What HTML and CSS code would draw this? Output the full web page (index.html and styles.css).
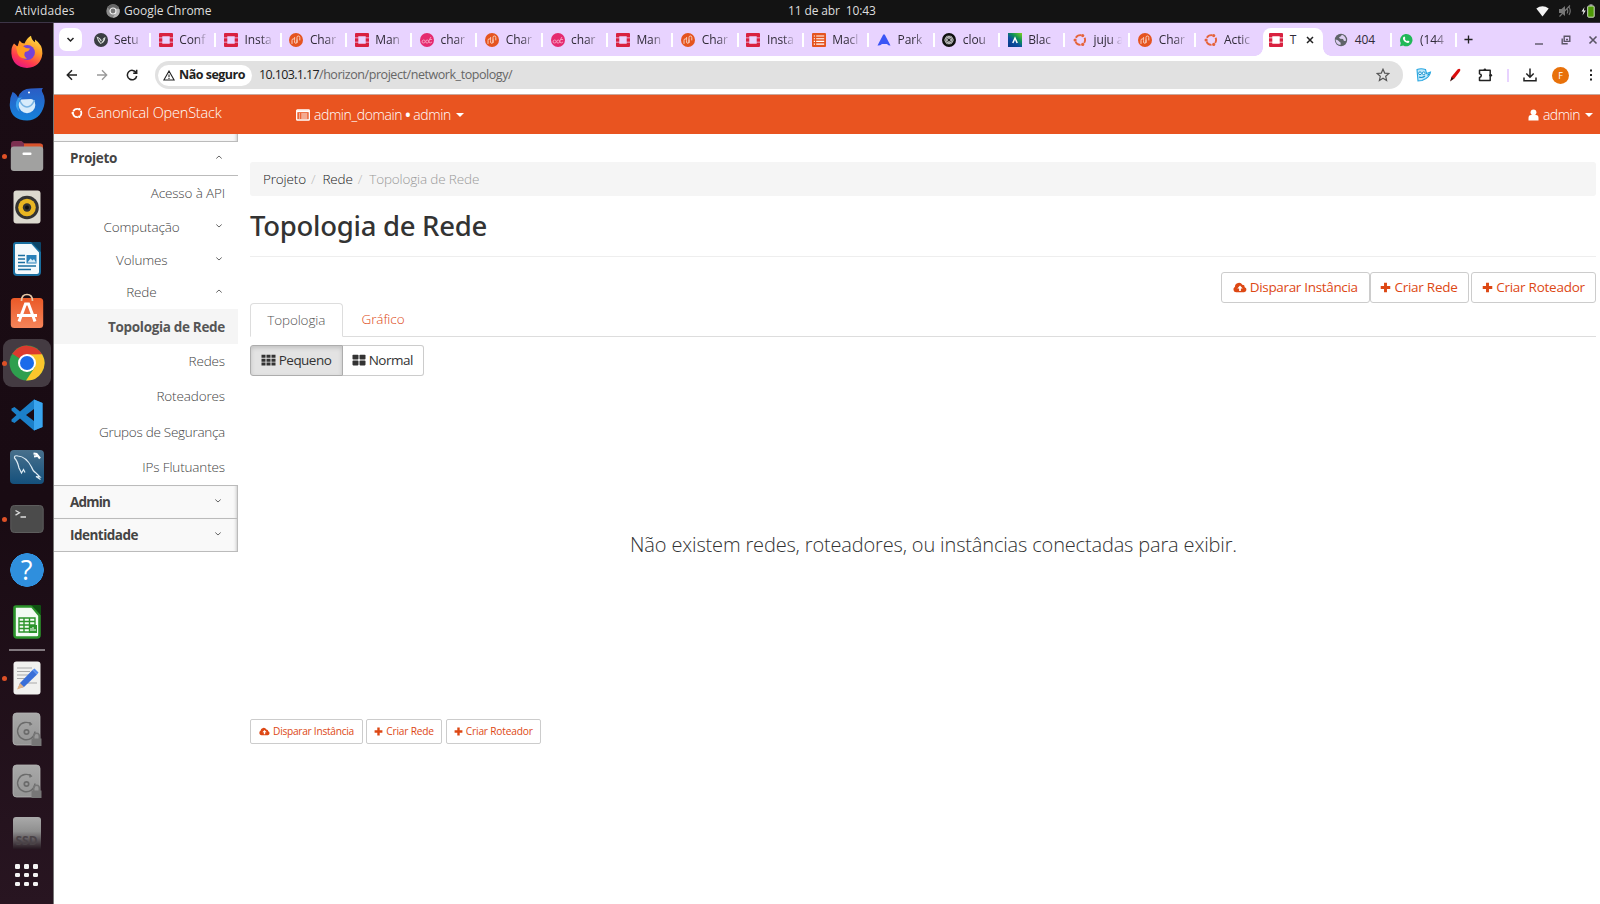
FILE: index.html
```
<!DOCTYPE html>
<html lang="pt-BR">
<head>
<meta charset="utf-8">
<title>Topologia de Rede - Canonical OpenStack</title>
<link rel="stylesheet" href="styles.css">
</head>
<body>
<svg class="defs" aria-hidden="true">
  <symbol id="openstack" viewBox="0 0 14 14"><path d="M1 0h12a1 1 0 0 1 1 1v3.400h-3.300V3.300H3.300v1.100H0V1a1 1 0 0 1 1-1zM0 5.300h3.300v3.400H0zM10.700 5.300h3.300v3.400h-3.300zM0 9.600h3.300v1.100h7.400V9.600H14V13a1 1 0 0 1-1 1H1a1 1 0 0 1-1-1z" fill="#d9213f"/></symbol>
  <symbol id="charm" viewBox="0 0 14 14"><circle cx="7" cy="7" r="7" fill="#e5541f"/><path d="M3 10.500V7.500q0-1.700 1.300-1.700t1.300 1.700V9q0 1.300 1.200 1.300T8 9V4.500q0-1.500 1.400-1.500t1.400 1.500V7M5.600 6V4.500M8 7v2.500" fill="none" stroke="#fbd9cb" stroke-width=".9" stroke-linecap="round"/></symbol>
  <symbol id="pink" viewBox="0 0 14 14"><circle cx="7" cy="7" r="7" fill="#e52a6f"/><path d="M2 9q0-2 1.600-2t1.600 1.500T3.600 10 2 9M5.600 9q0-2 1.600-2t1.600 1.500T7.200 10 5.600 9M8.500 9q1-3 2.500-5M9.500 6.500h2.600M9 9.500q2 1 3-.6" fill="none" stroke="#f7a3c1" stroke-width=".9"/></symbol>
  <symbol id="maas" viewBox="0 0 14 14"><rect width="14" height="14" rx="1" fill="#e5541f"/><path d="M1.800 3h1.200M1.800 5.700h1.200M1.800 8.400h1.200M1.800 11.100h1.200M4.200 3h8M4.200 5.700h8M4.200 8.400h8M4.200 11.100h8" stroke="#fff" stroke-width="1.100"/></symbol>
  <symbol id="ubuntu" viewBox="0 0 14 14"><circle cx="7.200" cy="7" r="4.900" fill="none" stroke="#e5633a" stroke-width="1.900" stroke-dasharray="6.260 4" stroke-dashoffset="-7.130"/><circle cx="2.100" cy="7" r="1.600" fill="#e5633a"/><circle cx="9.700" cy="2.600" r="1.600" fill="#e5633a"/><circle cx="9.700" cy="11.400" r="1.600" fill="#e5633a"/></symbol>
  <symbol id="globe" viewBox="0 0 14 14"><circle cx="7" cy="7" r="6.200" fill="#5f6368"/><path d="M1.500 6.500q2.200.2 3.200 1.500t2 1.800L6.500 12Q2 11.500 1.500 6.500zM8 1.800 6.500 3.500 5 4.200l1 1.600 3 .3 1 1.800 2-.2q.2-4-4-5.900z" fill="#dccdf0"/></symbol>
  <symbol id="cloud" viewBox="0 0 16 12"><path fill-rule="evenodd" d="M3.600 11.500A3.500 3.500 0 0 1 2.200 5 4.600 4.600 0 0 1 10.800 3a2.600 2.600 0 0 1 2.600 2.700 3 3 0 0 1-.8 5.800zM8 3.800 4.900 7H7v3h2V7h2.100z"/></symbol>
  <symbol id="plus" viewBox="0 0 12 12"><path d="M4.400.8h3.200v3.600h3.600v3.200H7.600v3.600H4.400V7.600H.8V4.400h3.600z"/></symbol>
  <symbol id="up" viewBox="0 0 8 6"><path d="M1.300 4.500 4 2l2.700 2.500" fill="none" stroke="#666" stroke-width="1"/></symbol>
  <symbol id="down" viewBox="0 0 8 6"><path d="M1.300 1.500 4 4l2.700-2.500" fill="none" stroke="#666" stroke-width="1"/></symbol>
  <symbol id="disk" viewBox="0 0 30 34"><rect x="1" y="1" width="27" height="32" rx="3.500" fill="url(#grey)" stroke="#b5b5b5" stroke-width=".8"/><path d="M20 12.500A8.700 8.700 0 1 0 23 19.500M18 13.500V10" fill="none" stroke="#6b6b6b" stroke-width="1.400"/><circle cx="14.500" cy="20" r="2.200" fill="none" stroke="#6b6b6b" stroke-width="1.700"/><path d="M19.500 26.500h10V34h-10z" fill="#777"/><path d="M21.700 27v-3a2.800 2.800 0 0 1 5.600 0v3" fill="none" stroke="#777" stroke-width="1.500"/></symbol>
  <linearGradient id="grey" x2="0" y2="1"><stop stop-color="#a9a9a9"/><stop offset="1" stop-color="#949494"/></linearGradient>
</svg>

<header class="topbar">
  <span class="activities">Atividades</span>
  <span class="app"><svg width="14" height="14" viewBox="0 0 14 14"><circle cx="7" cy="7" r="6.700" fill="#8b8b8b"/><path d="M7 .3A6.700 6.700 0 0 1 13.200 4.500H7a2.800 2.800 0 0 0-2.600 2L1.500 3.200A6.700 6.700 0 0 1 7 .3z" fill="#666"/><path d="M13.400 5a6.700 6.700 0 0 1-6.600 8.700L9.500 9a3 3 0 0 0 0-4z" fill="#b5b5b5"/><circle cx="7" cy="7" r="3" fill="#777" stroke="#eee" stroke-width="1.200"/></svg>Google Chrome</span>
  <span class="clock">11 de abr &nbsp;10:43</span>
  <span class="tray">
    <svg width="13" height="11" viewBox="0 0 13 11"><path d="M.3 2.500Q6.500-2 12.700 2.500L6.500 10.500z" fill="#f2f2f2"/></svg>
    <svg width="14" height="12" viewBox="0 0 14 12"><path d="M1 4h2.500L7 1v10L3.500 8H1z" fill="#777"/><path d="M9 3.500q1.500 2.500 0 5M11 2q2.500 4 0 8M1.500 11.500 12 .5" stroke="#777" stroke-width="1.100" fill="none"/></svg>
    <svg width="14" height="14" viewBox="0 0 14 14"><path d="M3.500 3 .5 7.500h2L1.500 11.500 4.800 6.500h-2z" fill="#eee"/><rect x="6.700" y="2" width="6.500" height="11.200" rx="1" fill="#4e9a06" stroke="#d0dcc4"/><path d="M8.500.5h3v1h-3z" fill="#ddd"/></svg>
  </span>
</header>

<div class="desktop">
<nav class="dock">
  <div class="slot"><svg width="34" height="34" viewBox="0 0 34 34"><defs><linearGradient id="fx" x1=".8" y1="0" x2=".3" y2="1"><stop stop-color="#ffe14a"/><stop offset=".4" stop-color="#ff9a28"/><stop offset=".75" stop-color="#ff3b4e"/><stop offset="1" stop-color="#e31587"/></linearGradient></defs><path d="M4 8.500l3.500 3Q9 7 9.500 5.500q2 3 5 3Q17 3 21 .8q.5 4.200 4 6.500V4.500Q33 10 32.400 18.500 31 32 17 33 2.500 32 1.400 18.500 1 12 4 8.500z" fill="url(#fx)"/><circle cx="17.300" cy="17.500" r="7.600" fill="#7542d8"/><path d="M6 12q5-3.500 10 1l4 .5q-1 3-5 3.500-2 4 2 6.500-7 1-9.500-5z" fill="#ff9b21"/></svg></div>
  <div class="slot"><svg width="36" height="34" viewBox="0 0 36 34"><defs><linearGradient id="tb" x2="0" y2="1"><stop stop-color="#2b5cc4"/><stop offset="1" stop-color="#1583dc"/></linearGradient></defs><path d="M3.500 5Q7 6 9 10.500 12 1.500 22 1.500l12-.5q-2 2-.5 4.500Q37 11 35 19 31 33 18 33.500 2 33 .8 19 .5 11 3.500 5z" fill="url(#tb)"/><path d="M9 11Q4 19 10.500 25 7 14 17 10z" fill="#3aa2ee"/><circle cx="18" cy="18" r="8.300" fill="#d8ecfb"/><path d="M10.500 13q3 7 7.500 7t7.500-7" fill="none" stroke="#78b4e3" stroke-width="1.600"/><path d="M9.500 16Q12 7.500 20 8.500l7 5-5-1.500-10 .5z" fill="#2467cb"/><circle cx="20" cy="5.500" r="1" fill="#fff"/></svg></div>
  <div class="slot run"><svg width="34" height="32" viewBox="0 0 34 32"><path d="M1 4q0-3 3-3h7.500l3 2.500H30q3 0 3 3V14H1z" fill="#7c3050"/><path d="M14 3.500h16q3 0 3 3V12H14z" fill="#d8532a"/><rect x=".8" y="6.500" width="32.400" height="24.500" rx="3" fill="#a1a1a0"/><rect x="12.500" y="12.500" width="9" height="2.500" rx="1" fill="#fff"/></svg></div>
  <div class="slot"><svg width="28" height="34" viewBox="0 0 28 34"><rect x=".5" y=".5" width="27" height="33" rx="3" fill="#dcd9cf"/><circle cx="14" cy="17.500" r="11.800" fill="#333"/><circle cx="14" cy="17.500" r="8.800" fill="#e9b622"/><circle cx="14" cy="17.500" r="4.200" fill="#333"/><circle cx="14" cy="17.500" r="2" fill="#111"/></svg></div>
  <div class="slot"><svg width="28" height="34" viewBox="0 0 28 34"><path d="M3 1h16l8 9v20q0 3-3 3H4q-3 0-3-3V3q0-2 2-2z" fill="#f4f9fc" stroke="#1a6fa0" stroke-width="2"/><path d="M18 0h9q1 0 1 1v9z" fill="#0c4568"/><path d="M5 13.500h7M5 17h7M5 20.500h7M5 24h18M5 27.500h13" stroke="#1a6fa0" stroke-width="1.500"/><path d="M13.500 13h10v8.500h-10z" fill="#2980b9"/><path d="m14.500 20.500 3-4 2 2 1.500-1.500 2 3.500z" fill="#d8ecf8"/></svg></div>
  <div class="slot"><svg width="34" height="36" viewBox="0 0 34 36"><defs><linearGradient id="st" x2="0" y2="1"><stop stop-color="#ea5927"/><stop offset="1" stop-color="#f5845a"/></linearGradient></defs><rect x=".8" y="5" width="32.400" height="30" rx="3.500" fill="url(#st)"/><path d="M11.500 8q0-6.500 5.500-6.500T22.500 8" fill="none" stroke="#e8c9a8" stroke-width="1.700"/><path d="M9 28.500 15.500 11h3L25 28.500M7 22.500h20" fill="none" stroke="#fff" stroke-width="3"/></svg></div>
  <div class="slot run active"><svg width="36" height="36" viewBox="0 0 36 36"><circle cx="18" cy="18" r="17.500" fill="#2e9f4e"/><path d="M18 18 3.200 8.700A17.500 17.500 0 0 1 33 9.200z" fill="#dc3b2e"/><path d="M17 35.500 26 22 19 9.500l14.100-.2A17.500 17.500 0 0 1 17 35.500z" fill="#fbc62c"/><circle cx="18" cy="18" r="9" fill="#fff"/><circle cx="18" cy="18" r="7" fill="#1a6bea"/></svg></div>
  <div class="slot"><svg width="32" height="32" viewBox="0 0 32 32"><path d="M23 .5 31.500 4v24L23 31.500 9 19.500 3.500 24 .5 22.500v-2L5.500 16 .5 11.500v-2L3.500 8 9 12.500zM23 10l-8 6 8 6z" fill="#1b80c9" fill-rule="evenodd"/><path d="M23 .5 31.500 4v24L23 31.500z" fill="#3aa5ee"/></svg></div>
  <div class="slot"><svg width="34" height="34" viewBox="0 0 34 34"><defs><linearGradient id="my" x2="0" y2="1"><stop stop-color="#48708c"/><stop offset="1" stop-color="#14507c"/></linearGradient></defs><rect width="34" height="34" rx="4" fill="url(#my)"/><path d="M15 22.500l-1.500-3-2 3.500L9 18Q7.500 11 4.500 8 4 5 8 6q8 .5 13.500 11 1.500 4.500 4.500 6l4 4-4-.5 4.500 3" fill="none" stroke="#dceaf3" stroke-width="1.200"/><path d="m23.500 3.500 3 .5 3.500 4.500M24 6.500l3-.5" stroke="#fff" stroke-width="2.200" fill="none"/></svg></div>
  <div class="slot run"><svg width="34" height="28" viewBox="0 0 34 28"><rect x=".8" y=".5" width="32.400" height="27" rx="3.500" fill="#4b4b4b" stroke="#5d5d5d"/><path d="m5.500 5.500 4 2.300-4 2.300M10.500 12h5.500" fill="none" stroke="#ddd" stroke-width="1.300"/></svg></div>
  <div class="slot help">?</div>
  <div class="slot"><svg width="28" height="34" viewBox="0 0 28 34"><path d="M3 1.500h16l7.500 9V30q0 2.500-2.500 2.500H4Q1.500 32.500 1.500 30V3q0-1.500 1.500-1.500z" fill="#f3fbf3" stroke="#2c942b" stroke-width="2.600"/><path d="M18 0h9q1 0 1 1v9z" fill="#0f5212"/><path d="M6 13h16v14H6zM6 16.500h16M6 20h16M6 23.500h16M11 13v14M16.500 13v14" fill="none" stroke="#2c942b" stroke-width="1.400"/><path d="M16 20h8v8h-8z" fill="#2c942b"/><path d="M18 26v-3M20 26v-4M22 26v-2" stroke="#fff" stroke-width="1"/></svg></div>
  <div class="rule"></div>
  <div class="slot run"><svg width="28" height="34" viewBox="0 0 28 34"><rect x=".5" y=".5" width="27" height="33" rx="3" fill="#f1f1ef"/><path d="M4 7h15M4 10.500h13M4 14h12M4 17.500h9M14 22h10" stroke="#aaa" stroke-width="1.100"/><path d="M19.500 9 24 13.500 11 26l-6 1.500L7 22z" fill="#3a6fd8"/><path d="m21.500 7.500 4 4-1.500 2L19.500 9z" fill="#4f8af0"/><path d="M7 22l4 4-7 2.500z" fill="#e3b384"/></svg></div>
  <div class="slot"><svg width="30" height="34"><use href="#disk"/></svg></div>
  <div class="slot"><svg width="30" height="34"><use href="#disk"/></svg></div>
  <div class="slot"><div class="ssd">SSD</div></div>
  <div class="apps"><i></i><i></i><i></i><i></i><i></i><i></i><i></i><i></i><i></i></div>
</nav>

<div class="browser">
  <div class="tabs">
    <div class="search"><svg width="9" height="6" viewBox="0 0 9 6"><path d="m1.500 1 3 3 3-3" fill="none" stroke="#222" stroke-width="1.500"/></svg></div>
    <div class="tab"><svg viewBox="0 0 14 14"><circle cx="7" cy="7" r="7" fill="#3a3e42"/><path d="M2.500 3.500q1 5 4 7.500 4.500-1.500 5-7-2.500.5-3.500 4-1.500-3.500-5.500-4.500z" fill="#d8ded9"/><path d="M4.500 5.500 7 9.500l2-3" fill="none" stroke="#3a3e42"/></svg><span>Setu</span></div>
    <div class="tab"><svg><use href="#openstack"/></svg><span>Conf</span></div>
    <div class="tab"><svg><use href="#openstack"/></svg><span>Insta</span></div>
    <div class="tab"><svg><use href="#charm"/></svg><span>Char</span></div>
    <div class="tab"><svg><use href="#openstack"/></svg><span>Man</span></div>
    <div class="tab"><svg><use href="#pink"/></svg><span>char</span></div>
    <div class="tab"><svg><use href="#charm"/></svg><span>Char</span></div>
    <div class="tab"><svg><use href="#pink"/></svg><span>char</span></div>
    <div class="tab"><svg><use href="#openstack"/></svg><span>Man</span></div>
    <div class="tab"><svg><use href="#charm"/></svg><span>Char</span></div>
    <div class="tab"><svg><use href="#openstack"/></svg><span>Insta</span></div>
    <div class="tab"><svg><use href="#maas"/></svg><span>Macl</span></div>
    <div class="tab"><svg viewBox="0 0 14 14"><path d="M.5 12.500 6 2q1-1.500 2 0l5.500 10.500q-2 .3-3.500-1.500H5Q3 12.800.5 12.500z" fill="#3b55f5"/></svg><span>Park</span></div>
    <div class="tab"><svg viewBox="0 0 14 14"><circle cx="7" cy="7" r="7" fill="#111"/><g fill="none" stroke="#ddd" stroke-width=".7"><circle cx="7" cy="7" r="1.600"/><ellipse cx="7" cy="7" rx="4.300" ry="2.600"/><ellipse cx="7" cy="7" rx="4.300" ry="2.600" transform="rotate(60 7 7)"/><ellipse cx="7" cy="7" rx="4.300" ry="2.600" transform="rotate(120 7 7)"/></g></svg><span>clou</span></div>
    <div class="tab"><svg viewBox="0 0 14 14"><defs><linearGradient id="bb" x1="1" y1="0" x2=".2" y2="1"><stop stop-color="#7ed321"/><stop offset=".4" stop-color="#0c8f58"/><stop offset=".65" stop-color="#0d4ea0"/><stop offset="1" stop-color="#0a3c8c"/></linearGradient></defs><path d="M0 0h14v14H0z" fill="url(#bb)"/><path d="m4.800 10 2.200-5 2.200 5" fill="none" stroke="#fff" stroke-width="1.500"/></svg><span>Blac</span></div>
    <div class="tab"><svg><use href="#ubuntu"/></svg><span>juju a</span></div>
    <div class="tab"><svg><use href="#charm"/></svg><span>Char</span></div>
    <div class="tab last"><svg><use href="#ubuntu"/></svg><span>Actic</span></div>
    <div class="tab current"><svg><use href="#openstack"/></svg><b>T</b><svg class="x" viewBox="0 0 8 8"><path d="m1 1 6 6M7 1 1 7" stroke="#222" stroke-width="1.500"/></svg></div>
    <div class="tab"><svg><use href="#globe"/></svg><span class="full">404</span></div>
    <div class="tab"><svg viewBox="0 0 14 14"><path d="M1 13.300 1.800 10A6.200 6.200 0 1 1 4.200 12.500z" fill="#20b858"/><path d="M4.500 4q1-1 1.500.3l.3 1-.6.8q.8 1.500 2.300 2.200l.8-.9 1.600.9q.1 1.400-1.400 1.700Q5 9.600 4 6q-.1-1.300.5-2z" fill="#fff"/></svg><span>(144</span></div>
    <svg class="new" viewBox="0 0 10 10"><path d="M5 .5v9M.5 5h9" stroke="#222" stroke-width="1.500"/></svg>
    <div class="win">
      <svg width="10" height="10" viewBox="0 0 10 10"><path d="M1 9h8" stroke="#5b5566" stroke-width="1.400"/></svg>
      <svg width="10" height="10" viewBox="0 0 10 10"><path d="M3.200 1.200h5.600v5.200H3.200zM1.200 3.500v5.200h5.500M5 4.500h2" fill="none" stroke="#5b5566" stroke-width="1.400"/></svg>
      <svg width="10" height="10" viewBox="0 0 10 10"><path d="m1.500 1.500 7 7M8.500 1.500l-7 7" stroke="#5b5566" stroke-width="1.600"/></svg>
    </div>
  </div>
  <div class="toolbar">
    <svg class="nav" viewBox="0 0 12 12"><path d="M11 6H1.500M6 1.300 1.300 6 6 10.700" fill="none" stroke="#222" stroke-width="1.500"/></svg>
    <svg class="nav" viewBox="0 0 12 12"><path d="M1 6h9.500M6 1.300 10.700 6 6 10.700" fill="none" stroke="#999" stroke-width="1.300"/></svg>
    <svg class="nav" viewBox="0 0 12 12"><path d="M10.200 3.800A4.700 4.700 0 1 0 10.700 7M10.700.8v3.500H7.200" fill="none" stroke="#222" stroke-width="1.500"/></svg>
    <div class="omni">
      <div class="insecure"><svg width="12" height="11" viewBox="0 0 12 11"><path d="M6 1 .9 10h10.200zM6 4.500v2.700M6 8v1" fill="none" stroke="#222" stroke-width="1.100"/></svg>Não seguro</div>
      <span class="host">10.103.1.17</span><span class="path">/horizon/project/network_topology/</span>
      <svg class="star" viewBox="0 0 14 14"><path d="m7 1.200 1.700 3.900 4.200.4-3.200 2.800.9 4.100L7 10.200l-3.600 2.200.9-4.100L1.100 5.500l4.200-.4z" fill="none" stroke="#555" stroke-width="1.200"/></svg>
    </div>
    <div class="ext">
      <svg width="16" height="14" viewBox="0 0 16 14"><path d="M1 1.500Q5 0 9.500 1.500l1 4 4-1.500q-.5 4-4.500 6.500L6 12.500l-4 .5z" fill="#bfe8fb" stroke="#27a6e0" stroke-width="1.100"/><circle cx="4" cy="5.300" r="1.400" fill="#fff" stroke="#1a95d0"/><circle cx="7.700" cy="5.300" r="1.400" fill="#fff" stroke="#1a95d0"/><path d="M3 9q3 1.500 6-1M11.500 7.500l2-2" fill="none" stroke="#1a95d0" stroke-width="1.100"/></svg>
      <svg class="pen" width="12" height="14" viewBox="0 0 12 14"><path d="M8.500 1.500q2-1.500 2.800 0 .2 1-.7 2.200L5 11 2.300 9z" fill="#d90d0d"/><path d="M2.500 8.800 5 10.700 1 13.500z" fill="#3a0a0a"/></svg>
      <svg class="puzzle" width="15" height="14" viewBox="0 0 15 14"><path d="M1.500 2.200h10.700v10.300H1.500V9.500q1.800-.3 1.800-1.900T1.500 5.700z" fill="none" stroke="#222" stroke-width="1.500" stroke-linejoin="round"/><circle cx="6.900" cy="1.800" r="1.300" fill="#222"/><circle cx="12.700" cy="7.300" r="1.400" fill="#222"/></svg>
      <i class="bar"></i>
      <svg class="dl" width="14" height="14" viewBox="0 0 14 14"><path d="M7 .5v8.500M3.300 5.500 7 9.200l3.700-3.700M1 9.500v3.300h12V9.500" fill="none" stroke="#222" stroke-width="1.500"/></svg>
      <i class="avatar">F</i>
      <svg width="4" height="12" viewBox="0 0 4 12"><path d="M1 .5h2v2H1zM1 5h2v2H1zM1 9.500h2v2H1z" fill="#222"/></svg>
    </div>
  </div>

  <div class="masthead">
    <span class="brand"><svg width="12" height="12" viewBox="0 0 14 14"><circle cx="7.200" cy="7" r="4.900" fill="none" stroke="#fff" stroke-width="2" stroke-dasharray="7.260 3" stroke-dashoffset="-6.630"/><g fill="#fff"><circle cx="2.100" cy="7" r="1.500"/><circle cx="9.700" cy="2.600" r="1.500"/><circle cx="9.700" cy="11.400" r="1.500"/></g></svg>Canonical OpenStack</span>
    <span class="domain"><svg width="14" height="12" viewBox="0 0 14 12"><rect x=".7" y="1" width="12.600" height="10" rx=".6" fill="none" stroke="#fff" stroke-width="1.300"/><path d="M1 2.300h12" stroke="#fff" stroke-width="1.800"/><path d="M2.800 5h1.400M2.800 7h1.400M2.800 9h1.400M5.200 5h6.200M5.200 7h6.200M5.200 9h6.200" stroke="#fff" stroke-width="1.200"/></svg>admin_domain <em>•</em> admin<i class="caret"></i></span>
    <span class="user"><svg width="11" height="12" viewBox="0 0 11 12"><circle cx="5.500" cy="3.300" r="2.900" fill="#fff"/><path d="M.5 11.500V9Q.5 6 3 6h5q2.500 0 2.500 3v2.500z" fill="#fff"/></svg>admin<i class="caret"></i></span>
  </div>

  <div class="page">
    <aside class="side">
      <div class="stub"></div>
      <div class="panel open"><span>Projeto</span><svg><use href="#up"/></svg></div>
      <div class="item api">Acesso à API</div>
      <div class="group comp"><span>Computação</span><svg><use href="#down"/></svg></div>
      <div class="group vol"><span>Volumes</span><svg><use href="#down"/></svg></div>
      <div class="group net"><span>Rede</span><svg><use href="#up"/></svg></div>
      <div class="item selected">Topologia de Rede</div>
      <div class="item">Redes</div>
      <div class="item">Roteadores</div>
      <div class="item seg">Grupos de Segurança</div>
      <div class="item">IPs Flutuantes</div>
      <div class="panel adm"><span>Admin</span><svg><use href="#down"/></svg></div>
      <div class="panel idt"><span>Identidade</span><svg><use href="#down"/></svg></div>
    </aside>
    <main class="main">
      <div class="crumbs"><span>Projeto</span><em>/</em><span>Rede</span><em>/</em><span class="here">Topologia de Rede</span></div>
      <h1>Topologia de Rede</h1>
      <div class="actions">
        <button class="b1"><svg class="cl"><use href="#cloud"/></svg>Disparar Instância</button>
        <button class="b2"><svg><use href="#plus"/></svg>Criar Rede</button>
        <button class="b3"><svg><use href="#plus"/></svg>Criar Roteador</button>
      </div>
      <div class="navtabs"><div class="on">Topologia</div><div class="off">Gráfico</div></div>
      <div class="sizes">
        <button class="small"><svg width="15" height="12" viewBox="0 0 15 12"><path d="M.5.8h4v3h-4zM5.500.8h4v3h-4zM10.500.8h4v3h-4zM.5 4.700h4v3h-4zM5.500 4.700h4v3h-4zM10.500 4.700h4v3h-4zM.5 8.600h4v3h-4zM5.500 8.600h4v3h-4zM10.500 8.600h4v3h-4z"/></svg>Pequeno</button>
        <button class="normal"><svg width="14" height="12" viewBox="0 0 14 12"><rect x=".5" y=".8" width="6" height="4.800" rx=".8"/><rect x="7.500" y=".8" width="6" height="4.800" rx=".8"/><rect x=".5" y="6.600" width="6" height="4.800" rx=".8"/><rect x="7.500" y="6.600" width="6" height="4.800" rx=".8"/></svg>Normal</button>
      </div>
      <div class="empty">Não existem redes, roteadores, ou instâncias conectadas para exibir.</div>
      <div class="actions mini">
        <button class="b1"><svg class="cl"><use href="#cloud"/></svg>Disparar Instância</button>
        <button class="b2"><svg><use href="#plus"/></svg>Criar Rede</button>
        <button class="b3"><svg><use href="#plus"/></svg>Criar Roteador</button>
      </div>
    </main>
  </div>
</div>
</div>
</body>
</html>
```
FILE: styles.css
```
* { box-sizing: border-box; }
body { margin: 0; width: 1600px; height: 904px; overflow: hidden; background: #fff; font-family: "Open Sans", "Noto Sans", sans-serif; font-size: 13.5px; line-height: 20px; color: #333; white-space: nowrap; }
svg { display: block; flex: none; }
.defs { position: absolute; width: 0; height: 0; }
i, em { font-style: normal; }

/* desktop top bar */
.topbar { height: 23px; background: #131313; color: #dedede; font-size: 12px; line-height: 22px; display: grid; grid-template-columns: 106px 682px 90px 1fr; border-bottom: 1px solid #3d3547; }
.activities { padding-left: 15px; letter-spacing: .2px; }
.app { display: flex; align-items: center; gap: 4px; }
.clock { letter-spacing: -.13px; }
.tray { display: flex; align-items: center; justify-content: flex-end; gap: 9px; padding-right: 5px; }

.desktop { display: flex; height: 881px; }

/* dock */
.dock { width: 54px; background: linear-gradient(#1a0c14, #190b13 55%, #281521); border-right: 1px solid #777; display: flex; flex-direction: column; align-items: center; padding-top: 3px; }
.slot { width: 48px; height: 51.85px; flex: none; display: flex; align-items: center; justify-content: center; position: relative; }
.slot.active { background: #443b42; border-radius: 9px; height: 48px; margin: 2px 0 1.85px; }
.run::before { content: ""; position: absolute; left: -1px; top: 50%; width: 5px; height: 5px; margin-top: -2px; border-radius: 50%; background: #dd5127; }
.help { color: #fff; font-size: 27px; background: radial-gradient(circle at 50% 50%, #2f8fdd 0 16.5px, transparent 17px); }
.rule { width: 36px; height: 1.5px; background: #82797f; margin: 1px 0; }
.ssd { width: 28px; height: 32px; border-radius: 3px 3px 0 0; background: linear-gradient(#aaa, #8f8f8f 45%, #251720); color: #4a4347; font-size: 12px; font-weight: 700; line-height: 48px; text-align: center; overflow: hidden; }
.apps { margin-top: 5px; display: grid; grid-template-columns: repeat(3, 4.6px); gap: 4.3px; }
.apps i { height: 4.6px; border-radius: 1.3px; background: #f4f4f4; }

/* browser frame */
.browser { width: 1546px; }
.tabs { height: 33px; background: #e8d3ff; display: flex; align-items: center; padding-left: 5px; font-size: 12px; color: #302b38; }
.search { width: 23px; height: 23px; border-radius: 7px; background: #fff; display: flex; align-items: center; justify-content: center; margin-right: 3px; }
.tab { width: 65.3px; height: 32px; flex: none; display: flex; align-items: center; padding-left: 8.5px; position: relative; }
.tab svg { width: 14px; height: 14px; margin-right: 6.5px; }
.tab span { width: 31px; letter-spacing: -.1px; -webkit-mask-image: linear-gradient(90deg, #000 50%, transparent); mask-image: linear-gradient(90deg, #000 50%, transparent 94%); }
.tab span.full { -webkit-mask-image: none; mask-image: none; }
.tab::after { content: ""; position: absolute; right: -.7px; top: 9px; width: 2px; height: 14px; background: #fff; }
.tab.last::after { display: none; }
.tab.current { width: 60px; height: 28px; margin: 5px 2.3px 0 3px; background: #fff; border-radius: 8px 8px 0 0; padding: 0 0 4px 6px; }
.tab.current::after, .tab.current::before { content: ""; position: absolute; top: auto; bottom: 0; width: 8px; height: 8px; background: radial-gradient(circle at 100% 0, transparent 7.5px, #fff 8px); right: -8px; }
.tab.current::before { right: auto; left: -8px; background: radial-gradient(circle at 0 0, transparent 7.5px, #fff 8px); }
.tab.current b { font-weight: 400; width: 13px; }
.tab.current svg.x { width: 8px; height: 8px; margin: 0 0 0 3px; }
.new { width: 9px; height: 9px; margin-left: 8px; }
.win { display: flex; gap: 17px; margin-left: auto; padding-right: 2px; }
.toolbar { height: 39px; border-bottom: 1px solid #c9a89c; display: flex; align-items: center; padding-left: 12px; }
.nav { width: 12px; height: 12px; margin-right: 18px; }
.omni { width: 1247.5px; height: 28px; border-radius: 14px; background: #e1e1e1; display: flex; align-items: center; padding-left: 3px; margin-left: -1px; font-size: 12.5px; color: #666; }
.insecure { height: 21px; width: 94px; background: #fff; border-radius: 11px; padding-left: 5px; display: flex; align-items: center; gap: 4px; font-weight: 700; letter-spacing: -.5px; color: #222; margin-right: 7px; }
.host { color: #222; letter-spacing: -.64px; }
.path { letter-spacing: -.44px; }
.star { width: 14px; height: 14px; margin: 0 13px 0 auto; }
.ext { flex: 1; display: flex; align-items: center; padding-left: 13.5px; }
.pen { margin: 0 17.5px 0 16.5px; }
.bar { width: 2px; height: 13px; background: #e8d3ff; margin: 0 14.5px 0 13.5px; }
.avatar { width: 17px; height: 17px; border-radius: 50%; background: #e8710a; color: #fff; font-size: 9px; line-height: 17px; text-align: center; margin: 0 19.5px 0 15px; }

/* dashboard header */
.masthead { height: 39px; background: #e95420; color: #fff; font-size: 14px; font-weight: 300; display: flex; align-items: center; }
.brand { width: 242px; padding-left: 17px; font-size: 14.5px; letter-spacing: -.2px; display: flex; align-items: center; gap: 4.5px; margin-top: -3px; }
.domain { display: flex; align-items: center; letter-spacing: -.42px; white-space: pre; }
.domain svg { margin-right: 4px; }
.domain em { font-weight: 700; }
.user { margin-left: auto; padding-right: 7px; display: flex; align-items: center; gap: 4px; letter-spacing: -.5px; }
.caret { border: 4px solid transparent; border-top-color: #fff; border-bottom: 0; margin-left: 5px; }
.user .caret { margin-left: 1px; }

.page { display: flex; }
/* side navigation */
.side { width: 184px; font-weight: 300; color: #444; letter-spacing: -.14px; }
.stub { height: 8px; background: #f7f7f7; border-bottom: 1px solid #bbb; border-right: 1px solid #bbb; box-shadow: inset -3px 0 3px -2px #ccc; }
.panel { height: 33.5px; padding: 0 15px 0 16px; display: flex; align-items: center; justify-content: space-between; font-weight: 700; color: #444; letter-spacing: -.33px; background: #f9f9f9; border: solid #bbb; border-width: 1px 1px 0 0; box-shadow: inset -3px 0 3px -2px #ccc; }
.panel svg, .group svg { width: 8px; height: 6px; margin-top: -3px; }
.panel.open { background: #fff; border: 0; border-bottom: 1px solid #bbb; box-shadow: none; }
.panel.adm { letter-spacing: -.8px; }
.panel.idt { height: 34px; border-bottom: 1px solid #bbb; letter-spacing: -.51px; }
.item { height: 35.2px; line-height: 35px; text-align: right; padding-right: 13px; }
.item.selected { background: #f5f5f5; font-weight: 700; letter-spacing: -.32px; color: #555; line-height: 36px; }
.item.seg { letter-spacing: -.28px; }
.api { height: 35px; }
.group { height: 32.5px; padding: 0 15px 2px 0; display: flex; align-items: center; justify-content: flex-end; }
.group svg { margin-top: -2px; }
.comp svg { margin-left: 35.5px; }
.vol svg { margin-left: 47.5px; }
.net svg { margin-left: 58.5px; }
.comp { height: 34px; }
.net { height: 32px; }

/* content */
.main { width: 1362px; padding: 28px 4px 0 12px; display: flex; flex-direction: column; }
.crumbs { height: 34px; background: #f5f5f5; border-radius: 3px; padding-left: 13px; line-height: 34px; display: flex; font-weight: 300; letter-spacing: -.15px; color: #222; }
.crumbs em { width: 16.5px; padding-left: 5px; color: #bbb; }
.crumbs .here { color: #999; }
h1 { margin: 0; height: 61px; padding-top: 10px; border-bottom: 1px solid #eee; font-family: "Noto Sans", sans-serif; font-size: 27.5px; line-height: 40px; font-weight: 500; letter-spacing: -.28px; color: #333; }
button { font: inherit; font-weight: 400; height: 30.5px; border: 1px solid #ccc; border-radius: 3px; background: #fff; color: #dd4814; padding: 0; display: flex; align-items: center; justify-content: center; gap: 3px; fill: currentColor; letter-spacing: -.33px; }
.actions { display: flex; justify-content: flex-end; margin-top: 15px; }
.actions svg { width: 11px; height: 11px; }
.actions svg.cl { width: 14px; height: 11px; }
.actions .b1 { width: 148.5px; }
.actions .b2 { width: 99px; margin-right: 2.5px; }
.actions .b3 { width: 125px; }
.actions .b2, .actions .b3 { letter-spacing: -.25px; }
.navtabs { height: 34.5px; border-bottom: 1px solid #ddd; display: flex; font-weight: 300; line-height: 32px; }
.on { width: 92.5px; height: 34.5px; border: 1px solid #ddd; border-bottom-color: #fff; border-radius: 4px 4px 0 0; color: #555; text-align: center; letter-spacing: -.13px; }
.off { padding-left: 19px; color: #dd4814; letter-spacing: -.09px; line-height: 33px; }
.sizes { display: flex; margin-top: 8px; }
.sizes button { color: #333; height: 31px; letter-spacing: -.53px; gap: 2.5px; padding-bottom: 2px; }
.sizes .small { width: 92.5px; background: #e3e3e3; border-color: #adadad; border-radius: 3px 0 0 3px; box-shadow: inset 0 2px 4px rgba(0,0,0,.15); }
.sizes .normal { width: 81px; border-left: 0; border-radius: 0 3px 3px 0; }
.empty { height: 343px; line-height: 337px; text-align: center; padding-left: 21px; font-size: 20px; font-weight: 300; letter-spacing: -.16px; }
.mini { justify-content: flex-start; margin-top: 0; font-size: 10.2px; }
.mini button { height: 25px; border-radius: 2px; padding-bottom: 1px; }
.mini svg { width: 9px; height: 9px; }
.mini svg.cl { width: 11px; height: 9px; }
.mini .b1 { width: 113px; margin-right: 3px; letter-spacing: -.28px; }
.mini .b2 { width: 76px; margin-right: 3.5px; }
.mini .b3 { width: 95.5px; }
.mini .b2, .mini .b3 { letter-spacing: -.2px; }
```
